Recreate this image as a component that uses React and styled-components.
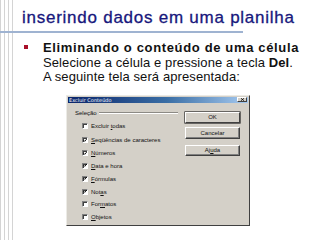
import styled, { createGlobalStyle } from 'styled-components';

const GlobalStyle = createGlobalStyle`
  html, body {
    margin: 0;
    padding: 0;
    background: #ffffff;
  }
`;

const Slide = styled.div`
  width: 320px;
  height: 240px;
  overflow: hidden;
  background-color: #ffffff;
  background-image: repeating-linear-gradient(90deg, #d4d4d4 0 1px, transparent 1px 4px);
  background-size: 14px 100%;
  background-repeat: no-repeat;
  display: flex;
  flex-direction: column;
  font-family: "Liberation Sans", Arial, sans-serif;
`;

const Header = styled.div`
  width: 243px;
  box-sizing: border-box;
  padding: 8px 0 3px 22px;
  border-bottom: 2px solid #9fb3d1;
  white-space: nowrap;
`;

const Titulo = styled.h1`
  margin: 0;
  font-size: 17px;
  line-height: 20px;
  font-weight: normal;
  letter-spacing: 0.75px;
  color: #17177c;
  -webkit-text-stroke: 0.3px #17177c;
`;

const Topico = styled.div`
  display: flex;
  margin-top: 8px;
  padding-left: 24px;
`;

const Marcador = styled.span`
  width: 4px;
  height: 4px;
  margin-top: 4px;
  background: #a8102a;
  flex: none;
`;

const Texto = styled.div`
  margin-left: 15px;
  font-size: 13px;
  line-height: 14.5px;
  color: #111111;
  white-space: nowrap;
`;

const Linha = styled.div`
  font-weight: ${p => (p.$negrito ? 'bold' : 'normal')};
  letter-spacing: ${p => (p.$negrito ? '0.65px' : '0.1px')};
`;

const Dialogo = styled.div`
  margin: 10px 0 0 66px;
  width: 184px;
  height: 131px;
  box-sizing: border-box;
  background: #d4d0c8;
  border: 1px solid;
  border-color: #ecebe6 #404040 #404040 #ecebe6;
  display: flex;
  flex-direction: column;
`;

const BarraTitulo = styled.div`
  height: 6px;
  margin: 1px 1px 0;
  padding: 0 1px 0 1px;
  background: linear-gradient(90deg, #0a246a 0%, #3a6ea5 55%, #a6caf0 100%);
  display: flex;
  align-items: center;
  justify-content: space-between;
`;

const TextoTitulo = styled.span`
  font-family: Tahoma, "DejaVu Sans", "Liberation Sans", sans-serif;
  font-size: 5px;
  line-height: 6px;
  color: #ffffff;
`;

const Fechar = styled.span`
  width: 10px;
  height: 5px;
  box-sizing: border-box;
  background: #d4d0c8;
  border: 1px solid;
  border-color: #ffffff #404040 #404040 #ffffff;
  display: flex;
  align-items: center;
  justify-content: center;
`;

const Corpo = styled.div`
  flex: 1;
  display: flex;
  justify-content: space-between;
  padding: 6px 9px 0 8px;
  font-family: "Liberation Sans", Arial, sans-serif;
  font-size: 6px;
  color: #111111;
`;

const Grupo = styled.div`
  width: 103px;
  display: flex;
  flex-direction: column;
`;

const Legenda = styled.div`
  display: flex;
  align-items: center;
  height: 8px;
  gap: 2px;
  &::after {
    content: '';
    flex: 1;
    height: 0;
    border-top: 1px solid #8c8a85;
    border-bottom: 1px solid #ffffff;
  }
`;

const Opcao = styled.div`
  display: flex;
  align-items: center;
  gap: 3px;
  height: 12.8px;
  padding-left: 7px;
  margin-top: ${p => (p.$primeira ? '3px' : '0')};
  margin-bottom: ${p => (p.$primeira ? '1.7px' : '0')};
`;

const Caixa = styled.span`
  width: 6px;
  height: 6px;
  box-sizing: border-box;
  background: #ffffff;
  border: 1px solid;
  border-color: #808080 #ffffff #ffffff #808080;
  box-shadow: inset 1px 1px 0 #404040;
  display: flex;
  align-items: center;
  justify-content: center;
  flex: none;
`;

const Rotulo = styled.span`
  white-space: nowrap;
  line-height: 6px;
  u {
    text-decoration-thickness: 0.5px;
  }
`;

const Botoes = styled.div`
  margin-top: 3px;
  display: flex;
  flex-direction: column;
  gap: 4px;
`;

const Botao = styled.div`
  width: 55px;
  height: 11.5px;
  box-sizing: border-box;
  background: #d4d0c8;
  border: 1px solid;
  border-color: #ffffff #404040 #404040 #ffffff;
  box-shadow: ${p => (p.$padrao ? '0 0 0 0.6px #202020' : 'inset -1px -1px 0 #808080')};
  display: flex;
  align-items: center;
  justify-content: center;
  font-size: 6px;
  color: #111111;
  margin-top: ${p => (p.$afastado ? '2px' : '0')};
`;

const Marca = () => (
  <svg width="5" height="5" viewBox="0 0 7 7">
    <path d="M1 3 L3 5 L6.5 1" fill="none" stroke="#000" strokeWidth="1.6" />
  </svg>
);

const opcoes = [
  { rotulo: <>Excluir <u>t</u>odas</>, marcada: false },
  { rotulo: <><u>S</u>eqüências de caracteres</>, marcada: true },
  { rotulo: <><u>N</u>úmeros</>, marcada: true },
  { rotulo: <><u>D</u>ata e hora</>, marcada: true },
  { rotulo: <><u>F</u>órmulas</>, marcada: true },
  { rotulo: <>Not<u>a</u>s</>, marcada: true },
  { rotulo: <>For<u>m</u>atos</>, marcada: false },
  { rotulo: <><u>O</u>bjetos</>, marcada: false },
];

function App() {
  return (
    <>
      <GlobalStyle />
      <Slide>
        <Header>
          <Titulo>inserindo dados em uma planilha</Titulo>
        </Header>
        <Topico>
          <Marcador />
          <Texto>
            <Linha $negrito>Eliminando o conteúdo de uma célula</Linha>
            <Linha>Selecione a célula e pressione a tecla <b>Del</b>.</Linha>
            <Linha>A seguinte tela será apresentada:</Linha>
          </Texto>
        </Topico>
        <Dialogo>
          <BarraTitulo>
            <TextoTitulo>Excluir Conteúdo</TextoTitulo>
            <Fechar>
              <svg width="5" height="3" viewBox="0 0 5 4">
                <path d="M0.5 0.3 L4.5 3.7 M4.5 0.3 L0.5 3.7" stroke="#000" strokeWidth="1" />
              </svg>
            </Fechar>
          </BarraTitulo>
          <Corpo>
            <Grupo>
              <Legenda>Seleção</Legenda>
              {opcoes.map((o, i) => (
                <Opcao key={i} $primeira={i === 0}>
                  <Caixa>{o.marcada && <Marca />}</Caixa>
                  <Rotulo>{o.rotulo}</Rotulo>
                </Opcao>
              ))}
            </Grupo>
            <Botoes>
              <Botao $padrao>OK</Botao>
              <Botao>Cancelar</Botao>
              <Botao $afastado>Aj<u>u</u>da</Botao>
            </Botoes>
          </Corpo>
        </Dialogo>
      </Slide>
    </>
  );
}

export default App;
